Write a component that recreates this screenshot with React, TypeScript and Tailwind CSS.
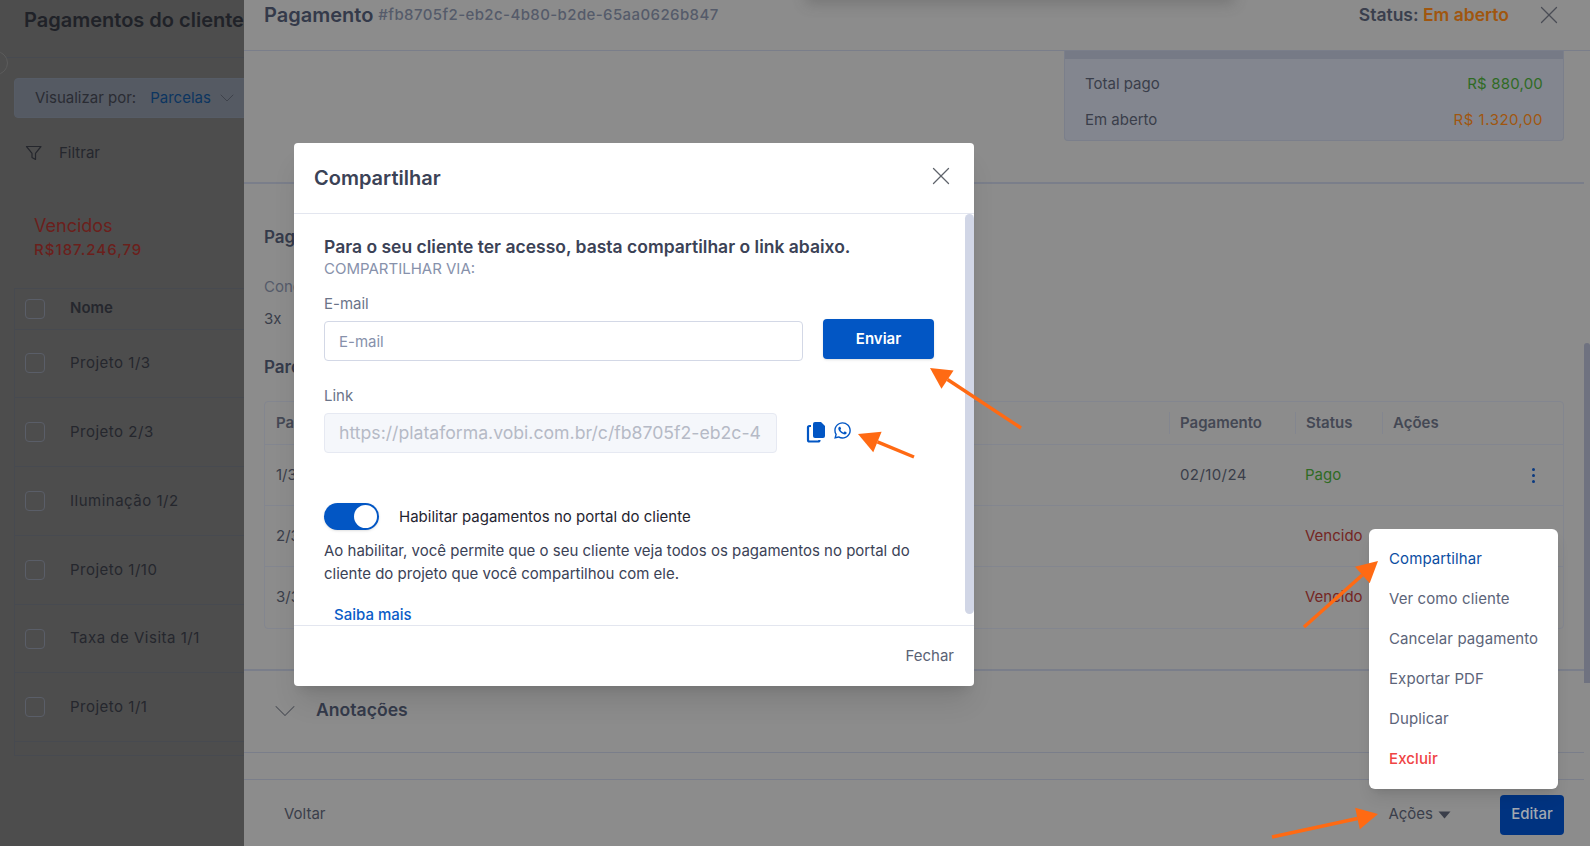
import { ChevronDown, X } from 'lucide-react';
import { FaWhatsapp } from 'react-icons/fa';

const rows = ['Projeto 1/3', 'Projeto 2/3', 'Iluminação 1/2', 'Projeto 1/10', 'Taxa de Visita 1/1', 'Projeto 1/1'];
const menu = ['Ver como cliente', 'Cancelar pagamento', 'Exportar PDF', 'Duplicar'];

const arrows = [
  { x1: 1021, y1: 428, x2: 930, y2: 368 },
  { x1: 914, y1: 457, x2: 858, y2: 434 },
  { x1: 1304, y1: 627, x2: 1378, y2: 561 },
  { x1: 1272, y1: 837, x2: 1378, y2: 814 }
];

function Arrow({ x1, y1, x2, y2 }: { x1: number; y1: number; x2: number; y2: number }) {
  const len = Math.hypot(x2 - x1, y2 - y1);
  const ux = (x2 - x1) / len;
  const uy = (y2 - y1) / len;
  const bx = x2 - ux * 21;
  const by = y2 - uy * 21;
  const head = `${x2},${y2} ${bx - uy * 11},${by + ux * 11} ${bx + uy * 11},${by - ux * 11}`;
  return (
    <g>
      <line x1={x1} y1={y1} x2={bx} y2={by} stroke="#ff6a13" strokeWidth="3.5" />
      <polygon points={head} fill="#ff6a13" />
    </g>
  );
}

function ClientPayments() {
  return (
    <aside className="w-[244px] h-full shrink-0 overflow-hidden bg-[#4d4d4d] text-[15px] text-[#25272d]">
      <div className="relative h-[58px] w-[244px] border-b border-[#474a50] pl-6 pt-[6px]">
        <h1 className="text-[20px] leading-[28px] font-semibold whitespace-nowrap text-[#202228]">Pagamentos do cliente</h1>
        <span className="absolute -left-4 top-[51px] h-6 w-6 rounded-full border border-[#5c5c5c] bg-[#4d4d4d]" />
      </div>
      <div className="mt-5 ml-[14px] flex h-10 w-[300px] items-center rounded-l border border-[#565c66] bg-[#555a63] pl-5">
        <span className="text-[#2a2c33]">Visualizar por:</span>
        <span className="ml-[14px] text-[#0c3560]">Parcelas</span>
        <ChevronDown className="ml-1 h-6 w-6 text-[#3c4048]" strokeWidth={0.9} />
      </div>
      <div className="mt-[24px] flex items-center pl-[25px] text-[#25272d]">
        <svg width="18" height="18" viewBox="0 0 18 18" fill="none" stroke="#25272d" strokeWidth="1.200" strokeLinejoin="round">
          <path d="M1.500 2.500h14.500l-5.500 6.800v6.200l-3.500-2v-4.200z" />
        </svg>
        <span className="ml-[16px]">Filtrar</span>
      </div>
      <div className="mt-[49px] pl-[34px]">
        <div className="text-[18px] leading-[24px] text-[#6b1f1c]">Vencidos</div>
        <div className="mt-[1px] text-[15px] leading-[22px] font-medium tracking-[1px] text-[#6b1f1c]">R$187.246,79</div>
      </div>
      <div className="mt-[27px] ml-[14px] w-[300px] border-t border-l border-[#474a50]">
        <div className="flex h-[41px] items-center border-b border-[#474a50] pl-[10px]">
          <span className="h-5 w-5 rounded border border-[#5a5e68]" />
          <span className="ml-[25px] font-semibold text-[#25272d]">Nome</span>
        </div>
        {rows.map((name) => (
          <div key={name} className="flex h-[68.800px] items-center border-b border-[#474a50] pl-[10px]">
            <span className="h-5 w-5 rounded border border-[#5a5e68]" />
            <span className="ml-[25px] tracking-[0.5px]">{name}</span>
          </div>
        ))}
        <div className="h-[14px] border-b border-[#474a50]" />
      </div>
    </aside>
  );
}

function InstallmentRow({ label, status, date, dots }: { label: string; status: string; date?: string; dots?: boolean }) {
  return (
    <div className="flex h-[61px] items-center border-b border-[#83868f] pl-[11px] last:border-b-0">
      <span className="flex-1">{label}</span>
      <span className="w-[126px] pl-[1px] tracking-[0.4px]">{date}</span>
      <span className={`w-[87px] ${status === 'Pago' ? 'text-[#2f6b24]' : 'text-[#742623]'}`}>{status}</span>
      <span className="flex w-[171px] justify-end pr-[28px]">
        {dots && (
          <span className="flex flex-col gap-[3px]">
            <i className="h-[3px] w-[3px] rounded-full bg-[#0a3a80]" />
            <i className="h-[3px] w-[3px] rounded-full bg-[#0a3a80]" />
            <i className="h-[3px] w-[3px] rounded-full bg-[#0a3a80]" />
          </span>
        )}
      </span>
    </div>
  );
}

function PaymentDrawer() {
  return (
    <section className="flex h-full flex-1 flex-col overflow-hidden bg-[#8c8c8c] text-[15px] text-[#3a3e4a]">
      <header className="flex h-[51px] shrink-0 items-start border-b border-[#7a7e8a] pl-5 pr-[26px] pt-[1px]">
        <span className="text-[20px] leading-[28px] font-semibold text-[#343a4a]">Pagamento</span>
        <span className="ml-[5px] mt-[2px] text-[15px] leading-[24px] font-medium tracking-[0.4px] text-[#555b6a]">#fb8705f2-eb2c-4b80-b2de-65aa0626b847</span>
        <span className="ml-auto text-[17.500px] leading-[28px] font-semibold text-[#3a3f4d]">
          Status: <span className="text-[#a0560f]">Em aberto</span>
        </span>
        <X className="ml-[25px] -mt-px h-[30px] w-[30px] text-[#4a4d55]" strokeWidth={1} />
      </header>
      <div className="mr-[6px] h-[133px] shrink-0 border-b-2 border-[#7a7e8a]">
        <div className="ml-[820px] mr-[20px] h-[90px] rounded-b border border-t-0 border-[#7b7f8b] bg-[#83868f]">
          <div className="h-[8px] bg-[#767a86]" />
          <div className="flex justify-between px-[20px] pt-[14px] leading-[22px]">
            <span>Total pago</span>
            <span className="tracking-[0.2px] text-[#2f6b24]">R$ 880,00</span>
          </div>
          <div className="flex justify-between px-[20px] pt-[14px] leading-[22px]">
            <span>Em aberto</span>
            <span className="tracking-[0.5px] text-[#a0560f]">R$ 1.320,00</span>
          </div>
        </div>
      </div>
      <div className="mr-[6px] h-[487px] shrink-0 border-b-2 border-[#7a7e8a] pl-5 pr-[20px]">
        <h2 className="pt-[41px] text-[17px] leading-[24px] font-semibold text-[#343a4a]">Pagamento</h2>
        <div className="mt-[27px] leading-[22px] text-[#555b6a]">Condições</div>
        <div className="mt-[10px] leading-[22px]">3x</div>
        <h2 className="mt-[25px] text-[17px] leading-[24px] font-semibold text-[#343a4a]">Parcelas</h2>
        <div className="mt-[22px] h-[228px] rounded border border-[#83868f]">
          <div className="flex h-[43px] items-center border-b border-[#83868f] pl-[11px] pr-[10px] font-semibold text-[#444854]">
            <span className="flex-1">Parcela</span>
            <span className="w-[126px] border-l border-[#83868f] pl-[10px]">Pagamento</span>
            <span className="w-[87px] border-l border-[#83868f] pl-[10px]">Status</span>
            <span className="w-[171px] border-l border-[#83868f] pl-[10px]">Ações</span>
          </div>
          <InstallmentRow label="1/3" date="02/10/24" status="Pago" dots />
          <InstallmentRow label="2/3" status="Vencido" dots />
          <InstallmentRow label="3/3" status="Vencido" />
        </div>
      </div>
      <div className="mr-[6px] flex h-[82px] shrink-0 items-center border-b border-[#7a7e8a] pb-[2px] pl-[23px]">
        <ChevronDown className="h-[36px] w-[36px] text-[#4a4d55]" strokeWidth={0.7} />
        <span className="ml-[13px] text-[17.600px] font-semibold text-[#343a4a]">Anotações</span>
      </div>
      <div className="mr-[6px] mt-[26px] flex h-[70px] shrink-0 items-center border-t border-[#7a7e8a] pl-[40px] pr-[20px]">
        <span>Voltar</span>
        <span className="ml-auto flex items-center gap-[5px] pl-[1px]">
          Ações
          <svg width="13" height="8" viewBox="0 0 13 8"><path d="M0.500 0.500h12L6.500 7.500z" fill="#3a3e4a" /></svg>
        </span>
        <span className="ml-[49px] flex h-10 w-[64px] items-center justify-center rounded bg-[#003380] font-medium text-[#a3a8b0]">Editar</span>
      </div>
    </section>
  );
}

function ShareModal() {
  return (
    <div className="absolute left-[294px] top-[143px] flex h-[543px] w-[680px] flex-col rounded-sm bg-white text-[15px] shadow-xl">
      <div className="flex h-[71px] shrink-0 items-center justify-between border-b border-[#e3e6ef] pl-5 pr-[18px]">
        <span className="text-[20px] font-semibold text-[#3b4256]">Compartilhar</span>
        <X className="mb-1 h-[30px] w-[30px] text-[#5f636b]" strokeWidth={1} />
      </div>
      <div className="relative h-[412px] shrink-0 overflow-hidden border-b border-[#e3e6ef] pl-[30px] pr-[40px]">
        <span className="absolute right-0 top-0 h-[400px] w-[9px] rounded-md bg-[#d1d6e6]" />
        <h3 className="pt-[21px] text-[17.500px] leading-[24px] font-semibold text-[#3b4256]">Para o seu cliente ter acesso, basta compartilhar o link abaixo.</h3>
        <p className="leading-[20px] text-[#8791ab]">COMPARTILHAR VIA:</p>
        <label className="mt-[15px] block leading-[20px] text-[#6b7489]">E-mail</label>
        <div className="mt-[5px] flex items-start gap-[20px]">
          <div className="mt-[2px] flex h-10 w-[479px] items-center rounded border border-[#d3d8e6] px-[14px] pt-[2px] text-[#8791ab]">E-mail</div>
          <button className="h-[40px] w-[111px] rounded bg-[#0256c4] text-[15px] font-semibold text-white shadow-sm">Enviar</button>
        </div>
        <label className="mt-[25px] block leading-[20px] text-[#6b7489]">Link</label>
        <div className="mt-[7px] flex items-center">
          <div className="flex h-10 w-[453px] items-center overflow-hidden rounded border border-[#e6e9f2] bg-[#f5f7fb] px-[14px] text-[17.650px] whitespace-nowrap text-[#b5bac6]">https://plataforma.vobi.com.br/c/fb8705f2-eb2c-4</div>
          <svg className="ml-[29px] mb-[2px]" width="20" height="22" viewBox="0 0 20 22" fill="none">
            <path d="M7 3a2 2 0 0 1 2-2h6l4 4v10a2 2 0 0 1-2 2H9a2 2 0 0 1-2-2z" fill="#0256c4" />
            <path d="M5 5H3.500A1.500 1.500 0 0 0 2 6.500V19a1.500 1.500 0 0 0 1.500 1.500H12A1.500 1.500 0 0 0 13.500 19" stroke="#0256c4" strokeWidth="2.200" />
          </svg>
          <FaWhatsapp className="ml-[7px] mb-[5px] text-[#0256c4]" size={19} />
        </div>
        <div className="mt-[52px] flex items-center">
          <span className="relative -mt-[2px] h-[27px] w-[55px] rounded-full bg-[#0256c4] shadow-sm">
            <span className="absolute right-[2px] top-[2px] h-[23px] w-[23px] rounded-full bg-white" />
          </span>
          <span className="ml-[20px] text-[#1f2430]">Habilitar pagamentos no portal do cliente</span>
        </div>
        <p className="mt-[9px] leading-[23px] text-[#3b4256]">Ao habilitar, você permite que o seu cliente veja todos os pagamentos no portal do cliente do projeto que você compartilhou com ele.</p>
        <a className="mt-[20px] ml-[10px] block leading-[20px] font-medium text-[#0b5cc7]">Saiba mais</a>
      </div>
      <div className="flex flex-1 items-start justify-end pr-5 pt-[19px] text-[#5a6275]">Fechar</div>
    </div>
  );
}

function ActionsMenu() {
  return (
    <div className="absolute left-[1369px] top-[529px] h-[260px] w-[189px] rounded-md bg-white pt-[10px] pl-[20px] text-[15px] leading-[40px] tracking-[0.1px] text-[#5c6479] shadow-lg">
      <div className="text-[#0b4ea2]">Compartilhar</div>
      {menu.map((item) => (
        <div key={item}>{item}</div>
      ))}
      <div className="font-medium text-[#ef4444]">Excluir</div>
    </div>
  );
}

export default function App() {
  return (
    <div className="relative flex h-[846px] w-[1590px] overflow-hidden font-['Inter',sans-serif]">
      <ClientPayments />
      <PaymentDrawer />
      <span className="absolute right-0 top-[343px] h-[340px] w-[6px] rounded-t bg-[#6f7280]" />
      <span className="absolute left-[810px] -top-[30px] h-[30px] w-[420px] shadow-[0_0_14px_4px_rgba(70,70,70,0.3)]" />
      <ShareModal />
      <ActionsMenu />
      <svg className="pointer-events-none absolute left-0 top-0" width="1590" height="846">
        {arrows.map((a) => (
          <Arrow key={a.x1} {...a} />
        ))}
      </svg>
    </div>
  );
}
